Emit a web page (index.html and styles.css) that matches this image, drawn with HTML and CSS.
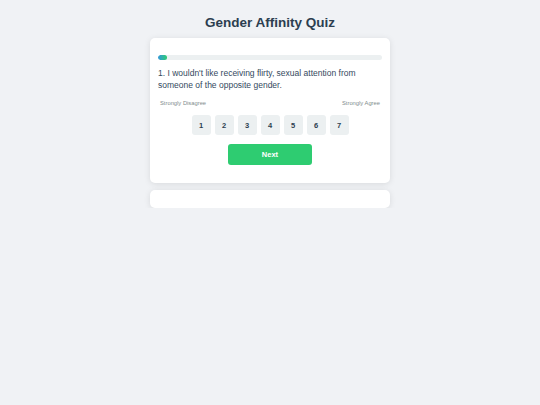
FILE: index.html
```html
<!DOCTYPE html>
<html lang="en">
<head>
    <meta charset="UTF-8">
    <meta name="viewport" content="width=device-width, initial-scale=1.0">
    <title>Gender Affinity Quiz</title>
    <link rel="stylesheet" href="styles.css">
</head>
<body>

<h1 class="quiz-title">Gender Affinity Quiz</h1>

<main class="quiz-card">
    <div class="progress">
        <div class="progress-fill" style="width: 4%"></div>
    </div>
    <p class="question">1. I wouldn't like receiving flirty, sexual attention from someone of the opposite gender.</p>
    <div class="scale-labels">
        <span>Strongly Disagree</span>
        <span>Strongly Agree</span>
    </div>
    <div class="options">
        <button class="option">1</button>
        <button class="option">2</button>
        <button class="option">3</button>
        <button class="option">4</button>
        <button class="option">5</button>
        <button class="option">6</button>
        <button class="option">7</button>
    </div>
    <button class="next-btn">Next</button>
</main>

<div class="result-card"></div>

</body>
</html>
```

FILE: styles.css
```css
body {
    font-family: 'Liberation Sans', Arial, sans-serif;
    background-color: #f0f2f5;
    margin: 0;
    padding: 15px 0 0;
    color: #2c3e50;
}

.quiz-title {
    font-size: 13.5px;
    line-height: 16px;
    text-align: center;
    color: #2c3e50;
    margin: 0 0 7px;
}

.quiz-card {
    width: 240px;
    margin: 0 auto;
    box-sizing: border-box;
    background-color: #fff;
    padding: 17px 8px 18px;
    border-radius: 5px;
    box-shadow: 0 1px 6px rgba(0, 0, 0, 0.1);
    display: flex;
    flex-direction: column;
    align-items: center;
}

.progress {
    width: 100%;
    height: 5px;
    background-color: #ecf0f1;
    border-radius: 3px;
    overflow: hidden;
}

.progress-fill {
    height: 100%;
    background: linear-gradient(90deg, #3498db, #2ecc71);
    border-radius: 3px;
}

.question {
    align-self: stretch;
    font-size: 8.5px;
    line-height: 12px;
    color: #34495e;
    margin: 7px 0 9px;
}

.scale-labels {
    align-self: stretch;
    display: flex;
    justify-content: space-between;
    font-size: 5.8px;
    line-height: 7px;
    color: #7f8c8d;
    padding: 0 2px;
    margin-bottom: 8px;
}

.options {
    display: flex;
    gap: 4px;
    margin-bottom: 9px;
}

.option {
    width: 19px;
    height: 20px;
    padding: 0;
    border: none;
    border-radius: 3px;
    background-color: #ecf0f1;
    color: #2c3e50;
    font-family: inherit;
    font-size: 7.5px;
    font-weight: bold;
}

.next-btn {
    width: 84px;
    height: 21px;
    border: none;
    border-radius: 3px;
    background-color: #2ecc71;
    color: #fff;
    font-family: inherit;
    font-size: 7.5px;
    font-weight: bold;
}

.result-card {
    width: 240px;
    height: 18px;
    margin: 7px auto 0;
    background-color: #fff;
    border-radius: 5px;
    box-shadow: 0 1px 6px rgba(0, 0, 0, 0.1);
}
```
